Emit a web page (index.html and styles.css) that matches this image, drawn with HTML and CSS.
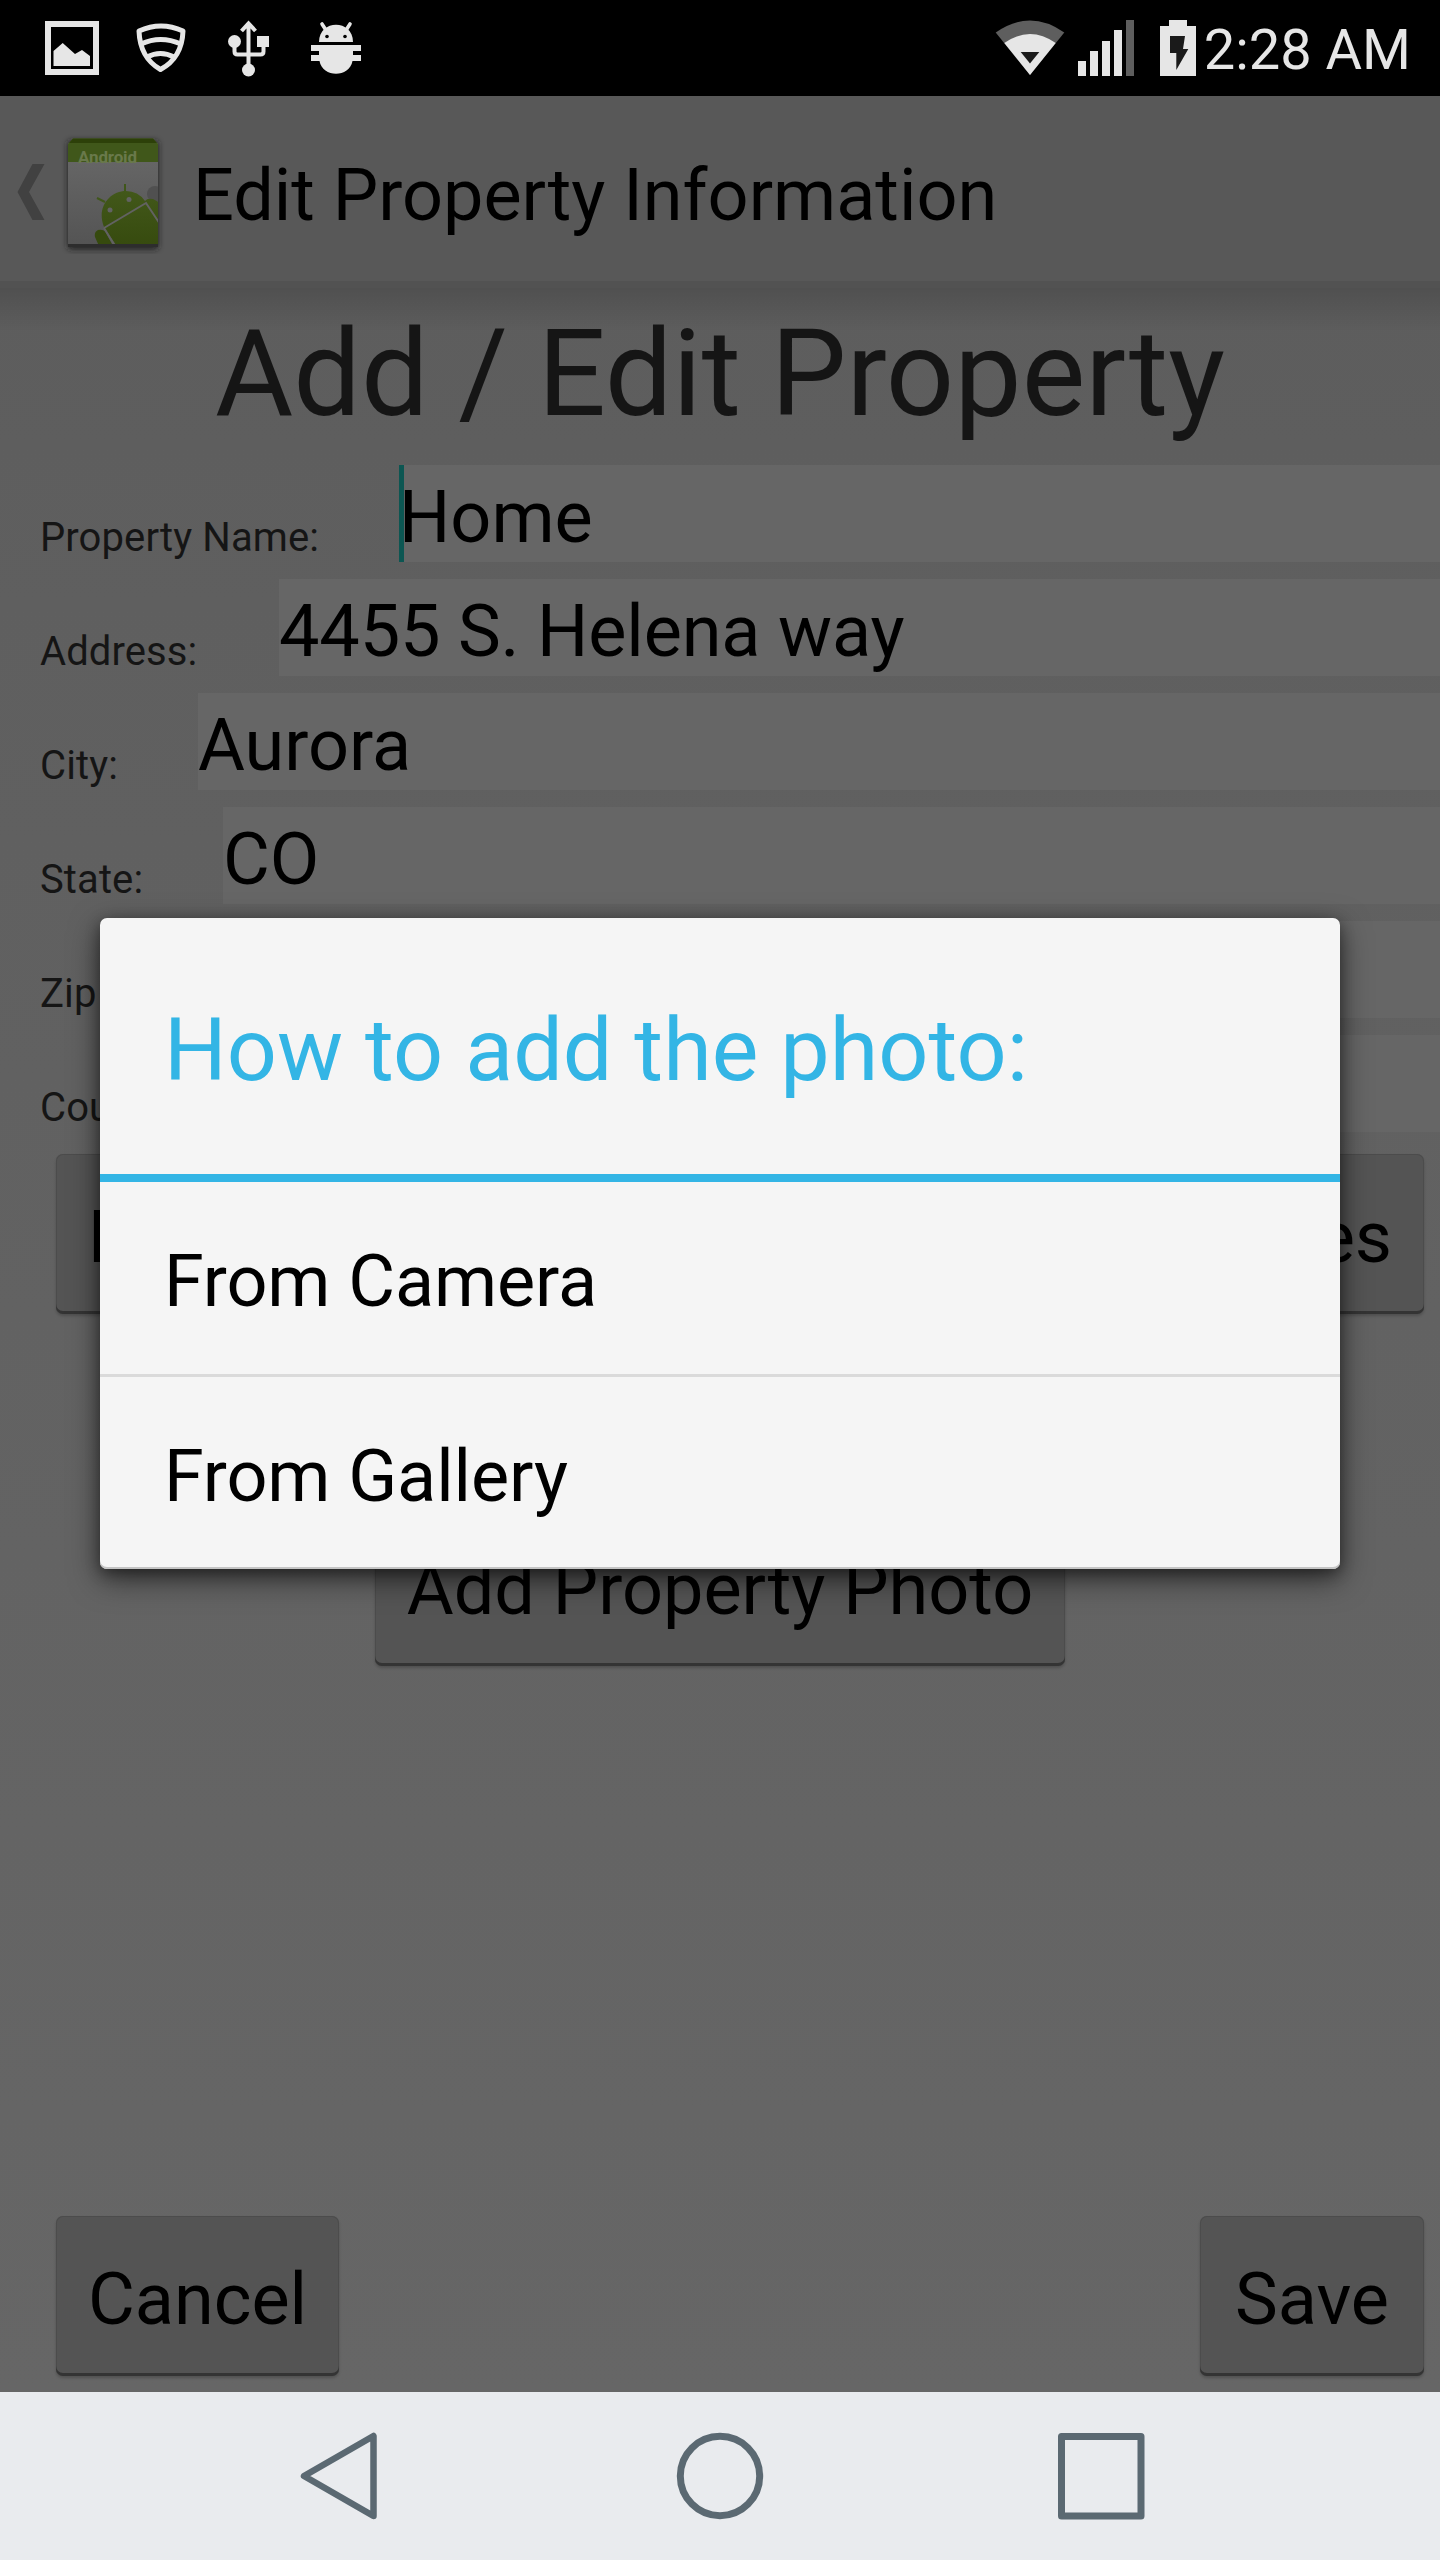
FILE: index.html
```html
<!DOCTYPE html>
<html lang="en">
<head>
<meta charset="utf-8">
<title>Edit Property Information</title>
<link rel="stylesheet" href="styles.css">
</head>
<body>
<div class="phone">
  <header class="status">
    <div class="status-left">
      <svg width="54" height="54" viewBox="45 21 54 54"><path d="M48 24h48v48H48z" fill="none" stroke="#e6e6e6" stroke-width="6"/><path d="M53.500 66V51l9.200-8L75 54l7-4 8 6v10z" fill="#e6e6e6"/></svg>
      <svg width="52" height="54" viewBox="135 21 52 54" fill="none" stroke="#e6e6e6" stroke-width="5" stroke-linejoin="round"><path d="M139 31q22-10 44 0q-1 27-22.500 38.500Q140 58 139 31z"/><path d="M141 44q19.500-9 40 0M147 57q13.500-7 27 0"/></svg>
      <svg width="42" height="58" viewBox="228 19 42 58"><path d="M248.500 66V25M241.500 31l7-7.500 7 7.500M234.500 44v7.500q0 3 3 3h23q3 0 3-3V44" fill="none" stroke="#e6e6e6" stroke-width="4"/><circle cx="234.500" cy="41.500" r="6.500" fill="#e6e6e6"/><path d="M257 36h12v11h-12z" fill="#e6e6e6"/><circle cx="248.500" cy="70" r="6.500" fill="#e6e6e6"/></svg>
      <svg width="50" height="54" viewBox="311 21 50 54" fill="#e6e6e6"><path d="M319 42c0-23 34-23 34 0z"/><path d="M322 24l4.500 7M350 24l-4.500 7" stroke="#e6e6e6" stroke-width="3.600" stroke-linecap="round"/><path d="M311 45h50v6h-8v4h8v6h-8.500c-3 17-30 17-33 0H311v-6h8v-4h-8z"/><circle cx="327" cy="36.500" r="1.800" fill="#000"/><circle cx="345" cy="36.500" r="1.800" fill="#000"/></svg>
    </div>
    <div class="status-right">
      <svg class="wifi" width="70" height="58" viewBox="995 19 70 58"><path d="M1030 75L995.700 32.500Q1030 8.500 1064.300 32.500z" fill="#5e5e5e"/><path d="M1030 75L1004.300 43Q1030 25 1055.700 43z" fill="#e6e6e6"/><path d="M1020.700 52h18.600L1030 63.500z" fill="#1a1a1a"/></svg>
      <svg class="signal" width="56" height="56" viewBox="1078 20 56 56" fill="#e6e6e6"><path d="M1078 61h8v15h-8zM1090 51h8v25h-8zM1102 41h8v35h-8zM1114 30h8v46h-8z"/><path d="M1126 20h8v56h-8z" fill="#5e5e5e"/></svg>
      <svg class="battery" width="36" height="56" viewBox="1160 20 36 56"><path d="M1169 20h18v6h9v50h-36V26h9z" fill="#e6e6e6"/><path d="M1170 36h15l-2 13h5.300L1176.300 70V53H1170z" fill="#1a1a1a"/></svg>
      <span class="clock">2:28 AM</span>
    </div>
  </header>

  <div class="actionbar">
    <svg class="back" width="28" height="56" viewBox="17 164 28 56"><path d="M44.500 164H32.500L17.500 192l15 28h12L29 192z" fill="#414141"/></svg>
    <svg class="app" width="110" height="124" viewBox="58 130 110 124">
      <defs>
        <linearGradient id="paper" x1="0" y1="0" x2="0" y2="1"><stop offset="0" stop-color="#6a6a6a"/><stop offset="1" stop-color="#545454"/></linearGradient>
        <linearGradient id="droid" x1="0" y1="0" x2="0" y2="1"><stop offset="0" stop-color="#42581a"/><stop offset="1" stop-color="#364a0e"/></linearGradient>
        <filter id="soft" x="-20%" y="-20%" width="140%" height="140%"><feGaussianBlur stdDeviation="3"/></filter>
        <clipPath id="sheet"><path d="M68 141h90v104H68z"/></clipPath>
      </defs>
      <rect x="68" y="141" width="90" height="108" rx="3" fill="#1c1c1c" filter="url(#soft)"/>
      <path d="M73 138.500h80l5 5.500v101H68V144z" fill="url(#paper)"/>
      <path d="M73 138.500h80l5 5.500v18H68V144z" fill="#40571a"/>
      <path d="M73 138.500h80l4 4.500H69z" fill="#2d4009"/>
      <text class="app-text" x="78" y="162.500" textLength="59">Android</text>
      <g clip-path="url(#sheet)">
        <circle cx="155" cy="194" r="8" fill="#505050"/>
        <path d="M125 184v12M97 198l8 4" stroke="#40571a" stroke-width="2"/>
        <path d="M104 227C96 207 110 191 126 191q12 0 19 10q2-3 8-2l7 4v45h-42z" fill="url(#droid)"/>
        <path d="M98 230q6-1 8 3l7 13H99l-4-9q-1-5 3-7z" fill="#364a0e"/>
        <path d="M104 228l42-25 14 21M104 228l11 18" fill="none" stroke="#626262" stroke-width="2"/>
        <circle cx="110" cy="210" r="2.500" fill="#626262"/><circle cx="129" cy="199.500" r="2.500" fill="#626262"/>
      </g>
      <path d="M68 244h90v3H68z" fill="#2d2d2d"/>
    </svg>
    <h1 class="bar-title">Edit Property Information</h1>
  </div>

  <main class="content">
    <h2 class="title">Add / Edit Property</h2>
    <div class="form">
      <div class="row"><label class="label name">Property Name:</label><div class="field focused">Home</div></div>
      <div class="row"><label class="label address">Address:</label><div class="field long">4455 S. Helena way</div></div>
      <div class="row"><label class="label city">City:</label><div class="field">Aurora</div></div>
      <div class="row"><label class="label state">State:</label><div class="field">CO</div></div>
      <div class="row"><label class="label zip">Zip Code:</label><div class="field"></div></div>
      <div class="row"><label class="label country">Country:</label><div class="field"></div></div>
    </div>
    <div class="buttons top"><div class="btn side left">P</div><div class="btn side right">es</div></div>
    <div class="buttons photo"><div class="btn wide">Add Property Photo</div></div>
    <div class="buttons bottom"><div class="btn cancel">Cancel</div><div class="btn save">Save</div></div>
  </main>

  <nav class="nav">
    <svg width="78" height="90" viewBox="300 2431 78 90"><path d="M373.500 2436v80L304 2476z" fill="none" stroke="#5b6972" stroke-width="6.500" stroke-linejoin="round"/></svg>
    <svg width="88" height="88" viewBox="0 0 88 88"><circle cx="44" cy="44" r="39.700" fill="none" stroke="#5b6972" stroke-width="7"/></svg>
    <svg width="88" height="88" viewBox="0 0 88 88"><rect x="4.500" y="4.500" width="79.500" height="79.500" fill="none" stroke="#5b6972" stroke-width="7" stroke-linejoin="round"/></svg>
  </nav>

  <section class="dialog">
    <h3 class="dialog-title">How to add the photo:</h3>
    <div class="option">From Camera</div>
    <div class="option">From Gallery</div>
  </section>
</div>
</body>
</html>
```
FILE: styles.css
```css
* { box-sizing: border-box; }
body { margin: 0; font-family: Roboto, "Liberation Sans", sans-serif; }
h1, h2, h3 { margin: 0; font-weight: 400; }
svg { display: block; flex: none; }

.phone {
  position: relative;
  width: 1440px;
  height: 2560px;
  overflow: hidden;
  display: flex;
  flex-direction: column;
  white-space: nowrap;
}

.status {
  height: 96px;
  background: #000;
  display: flex;
  justify-content: space-between;
  align-items: center;
  padding: 0 29px 0 45px;
}
.status-left { display: flex; align-items: center; gap: 41px; }
.status-left svg:nth-child(2) { margin-left: -5px; }
.status-right { display: flex; align-items: center; }
.signal { margin-left: 13px; }
.battery { margin-left: 26px; }
.clock { margin-left: 8px; padding-top: 5px; color: #e6e6e6; font-size: 56px; line-height: 91px; }

.actionbar {
  height: 192px;
  background: #585858;
  border-bottom: 7px solid #525252;
  display: flex;
  align-items: center;
  padding-left: 17px;
}
.back { margin-top: 7px; }
.app { margin: 7px 0 0 13px; }
.app-text { font-size: 17px; font-weight: 700; fill: #69794b; }
.bar-title { margin-left: 25px; font-size: 72px; line-height: 170px; padding-top: 15px; color: #000; }

.content {
  height: 2104px;
  background:
    linear-gradient(rgba(0, 0, 0, .14), rgba(0, 0, 0, 0)) top / 100% 44px no-repeat,
    linear-gradient(#5d5d5d, #5f5f5f 15%, #636363 60%, #666);
  display: flex;
  flex-direction: column;
}
.title {
  height: 177px;
  line-height: 172px;
  text-align: center;
  font-size: 120px;
  color: #151515;
}
.form { display: flex; flex-direction: column; gap: 17px; }
.row { display: flex; height: 97px; }
.label { flex: none; padding-left: 40px; font-size: 40px; line-height: 146px; letter-spacing: .1px; color: #151515; }
.name { width: 399px; }
.address { width: 279px; }
.city { width: 198px; }
.state { width: 223px; }
.zip { width: 230px; }
.country { width: 260px; }
.field { flex: 1; background: #666; color: #000; font-size: 72px; line-height: 105px; }
.long { letter-spacing: -.15px; }
.focused { box-shadow: inset 5px 0 #0c5652; }

.buttons { display: flex; flex: none; height: 160px; padding: 0 16px 0 56px; }
.top { margin-top: 22px; justify-content: space-between; }
.photo { margin-top: 192px; padding: 0; justify-content: center; }
.bottom { margin-top: 550px; justify-content: space-between; }
.btn {
  background: #545454;
  border-radius: 7px;
  box-shadow: inset 0 -3px #343434, inset 0 0 0 1px #4c4c4c, 0 2px 3px rgba(0, 0, 0, .2);
  color: #000;
  font-size: 72px;
  line-height: 167px;
  text-align: center;
}
.side { width: 224px; padding: 0 32px; }
.left { text-align: left; }
.right { text-align: right; }
.wide { width: 690px; }
.cancel { width: 283px; }
.save { width: 224px; }

.nav {
  height: 168px;
  background: #e9ebee;
  display: flex;
  align-items: center;
  padding-left: 300px;
}
.nav svg:nth-child(2) { margin-left: 298px; }
.nav svg:nth-child(3) { margin-left: 293px; }

.dialog {
  position: absolute;
  left: 100px;
  top: 918px;
  width: 1240px;
  height: 651px;
  background: #f5f5f5;
  border-radius: 7px;
  box-shadow: inset 0 -2px #c4c4c4, 0 10px 30px rgba(0, 0, 0, .55), 0 4px 14px rgba(0, 0, 0, .35);
}
.dialog-title {
  height: 264px;
  padding-left: 64px;
  border-bottom: 8px solid #33b5e5;
  font-size: 88px;
  line-height: 264px;
  letter-spacing: .05px;
  color: #33b5e5;
}
.option { height: 195px; padding-left: 64px; font-size: 72px; line-height: 199px; letter-spacing: -.1px; color: #000; }
.option + .option { border-top: 3px solid #dadada; margin-top: -3px; }
```
